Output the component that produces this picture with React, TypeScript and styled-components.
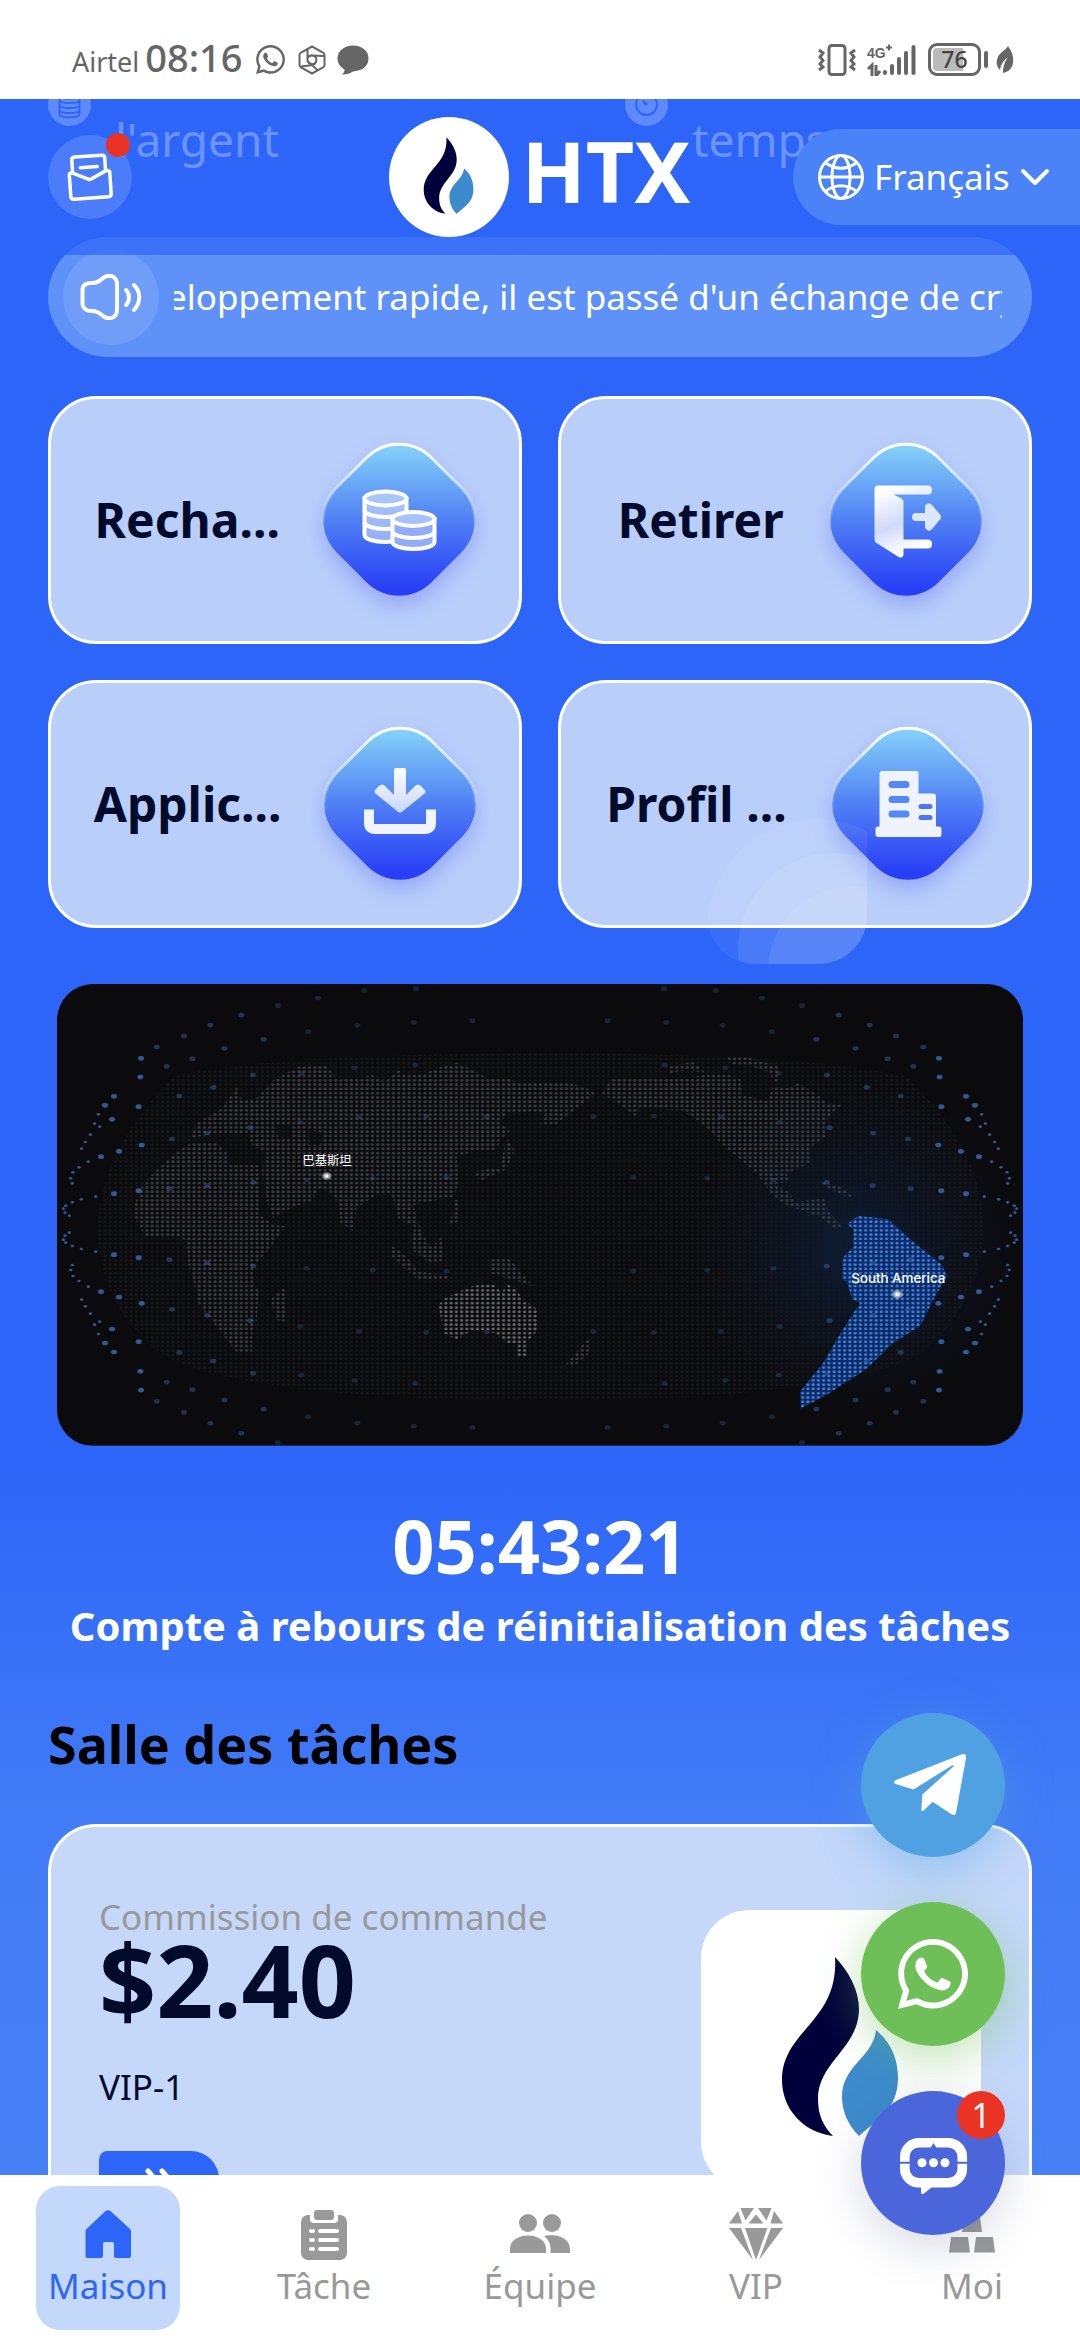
import { useId } from 'react'
import type { ReactNode } from 'react'
import styled, { createGlobalStyle } from 'styled-components'
import { FaWhatsapp } from 'react-icons/fa'

type tileType = { label: string; icon: ReactNode }
type tabType = { label: string; icon: ReactNode; active?: boolean }

/* ---------- logo ---------- */

const Flame = () => (
  <svg viewBox="0 0 280 280" width="100%" height="100%" aria-hidden="true">
    <rect width="280" height="280" fill="#fff" />
    <path
      d="M134 47C148 62 158 80 158 99C158 138 117 152 117 189C117 205 122 216 132 226C101 222 81 198 81 170C81 120 138 112 134 47Z"
      fill="#02003a"
    />
    <path
      d="M175 120C192 134 197 152 197 168C197 200 175 210 158 226C147 215 141 201 141 187C141 155 172 148 175 120Z"
      fill="#3d8bcd"
    />
  </svg>
)

/* ---------- status bar icons ---------- */

const HexIcon = () => (
  <svg width="28" height="30" viewBox="0 0 28 30" fill="none" stroke="#666" strokeWidth="2" aria-hidden="true">
    <path d="M14 1.500L25 7.500Q26.500 8.500 26.500 10V20Q26.500 21.500 25 22.500L14 28.500L3 22.500Q1.500 21.500 1.500 20V10Q1.500 8.500 3 7.500Z" />
    <path d="M9.500 4V16L20 25.500M9.500 14Q10 10.500 14 10.500T18.500 15Q18 19 14 19T9.500 15M12 10.500L26 11M18.500 15Q18 19 15 20L3 21.500" />
  </svg>
)

const BubbleIcon = () => (
  <svg width="32" height="30" viewBox="0 0 32 30" fill="#666" aria-hidden="true">
    <path d="M16 0.500C25 0.500 31.500 6 31.500 13.500S25 26 16 26.500C13 28.500 9 29.800 5 29.500C7 28 7.500 26.500 7.500 24.500C3 22 0.500 18 0.500 13.500C0.500 6 7 0.500 16 0.500Z" />
  </svg>
)

const VibrateIcon = () => (
  <svg width="38" height="32" viewBox="0 0 38 32" fill="none" stroke="#666" strokeWidth="3" aria-hidden="true">
    <rect x="11" y="1.500" width="16" height="29" rx="3" />
    <path d="M1 6L5 9L2 13L5 16.500L2 20L5 23L1 26M37 6L33 9L36 13L33 16.500L36 20L33 23L37 26" />
  </svg>
)

const SignalIcon = () => (
  <svg width="50" height="32" viewBox="0 0 50 32" aria-hidden="true">
    <text x="0" y="14" fontSize="14" fontWeight="700" fill="#666" fontFamily="'Liberation Sans', sans-serif">
      4G
    </text>
    <path d="M19 3.500h6M22 0.500v6" stroke="#666" strokeWidth="2" />
    <path d="M1 25L5 21V32M9 21V32L13 27" stroke="#666" strokeWidth="3" fill="none" />
    <path d="M18 28v1M25 22v7M32 15v14M39 9v20M46.500 3v26" stroke="#666" strokeWidth="4" strokeLinecap="round" />
  </svg>
)

const LeafIcon = () => (
  <svg width="18" height="28" viewBox="0 0 18 28" fill="#666" aria-hidden="true">
    <path d="M12 0C16 6 18 11 17 17C16 23 12 26 7 27C7 20 9 15 12 11C8 14 5 18 4 24C0 20 0 15 2 11C4 6 9 5 12 0Z" />
  </svg>
)

/* ---------- header icons ---------- */

const MailIcon = () => (
  <svg width="46" height="48" viewBox="0 0 46 48" fill="none" stroke="#fff" strokeWidth="3.500" strokeLinejoin="round" aria-hidden="true">
    <g transform="rotate(-4 23 24)">
      <path d="M6 19V6Q6 3 9 3H36Q39 3 39 6V19" />
      <path d="M2.500 20Q3 18 6 19L21 26Q22.500 27 24 26L39 19Q42 18 43 20V42Q43 45 40 45H5.500Q2.500 45 2.500 42Z" />
      <path d="M14 14H31" strokeLinecap="round" />
    </g>
  </svg>
)

const GlobeIcon = () => (
  <svg width="46" height="46" viewBox="0 0 46 46" fill="none" stroke="#fff" strokeWidth="3" aria-hidden="true">
    <circle cx="23" cy="23" r="21.500" />
    <ellipse cx="23" cy="23" rx="9" ry="21.500" />
    <path d="M1.500 23H44.500M7 8.500Q23 20 39 8.500M7 37.500Q23 26 39 37.500" />
  </svg>
)

const ChevronIcon = () => (
  <svg width="30" height="18" viewBox="0 0 30 18" fill="none" stroke="#fff" strokeWidth="4" strokeLinecap="round" strokeLinejoin="round" aria-hidden="true">
    <path d="M3 3L15 15L27 3" />
  </svg>
)

const SpeakerIcon = () => (
  <svg width="62" height="46" viewBox="0 0 62 46" fill="none" stroke="#fff" strokeWidth="4" strokeLinecap="round" aria-hidden="true">
    <path d="M12 9C17 9 20 7 23 4C30-1 37 3 37 10V36C37 43 30 47 23 42C20 39 17 37 12 37C5 37 2.500 33 2.500 30V16C2.500 12 5 9 12 9Z" />
    <path d="M46 16C50 20 50 27 46 31M54 11C61 18 61 28 54 36" />
  </svg>
)

const CoinsBadge = () => (
  <svg width="43" height="43" viewBox="0 0 43 43" fill="none" aria-hidden="true">
    <circle cx="21.500" cy="21.500" r="21.500" fill="#fff" opacity="0.8" />
    <g stroke="#2c65f8" strokeWidth="2">
      <ellipse cx="21.500" cy="12" rx="10" ry="3.500" />
      <path d="M11.500 12V31C11.500 35.500 31.500 35.500 31.500 31V12M11.500 17C11.500 21 31.500 21 31.500 17M11.500 22C11.500 26 31.500 26 31.500 22M11.500 27C11.500 31 31.500 31 31.500 27" />
    </g>
  </svg>
)

const ClockBadge = () => (
  <svg width="43" height="43" viewBox="0 0 43 43" fill="none" aria-hidden="true">
    <circle cx="21.500" cy="21.500" r="21.500" fill="#fff" opacity="0.8" />
    <circle cx="21.500" cy="21.500" r="10.500" stroke="#2c65f8" strokeWidth="2" />
    <path d="M22 22L18 18" stroke="#2c65f8" strokeWidth="3" />
  </svg>
)

/* ---------- tile icons ---------- */

const Diamond = ({ children }: { children: ReactNode }) => {
  const id = useId()
  return (
    <DiamondSvg viewBox="0 0 152 152" aria-hidden="true">
      <defs>
        <linearGradient id={`${id}fill`} x1="0" y1="0" x2="1" y2="1">
          <stop offset="0.120" stopColor="#83cff9" />
          <stop offset="0.480" stopColor="#5284f4" />
          <stop offset="0.860" stopColor="#283ff6" />
        </linearGradient>
        <linearGradient id={`${id}edge`} x1="0" y1="0" x2="1" y2="1">
          <stop offset="0.100" stopColor="#fff" />
          <stop offset="0.450" stopColor="#fff" stopOpacity="0.2" />
          <stop offset="0.550" stopColor="#fff" stopOpacity="0" />
        </linearGradient>
      </defs>
      <rect
        x="9"
        y="9"
        width="134"
        height="134"
        rx="46"
        transform="rotate(45 76 76)"
        fill={`url(#${id}fill)`}
        stroke={`url(#${id}edge)`}
        strokeWidth="3"
      />
      {children}
    </DiamondSvg>
  )
}

const CoinsIcon = () => (
  <Diamond>
    <g stroke="#fff" strokeWidth="4">
      <path d="M41.500 54.500V91C41.500 95 51 98 62.500 98S83.500 95 83.500 91V54.500Z" fill="#fff" fillOpacity="0.45" />
      <ellipse cx="62.500" cy="54.500" rx="21" ry="7" fill="#a9c6f8" />
      <path d="M41.500 66C41.500 70 51 73 62.500 73S83.500 70 83.500 66M41.500 78C41.500 82 51 85 62.500 85S83.500 82 83.500 78" fill="none" />
      <path d="M69.500 75V98C69.500 102 79 105 90.500 105S111.500 102 111.500 98V75Z" fill="#93acf7" />
      <ellipse cx="90.500" cy="75" rx="21" ry="7" fill="#a9c1f8" />
      <path d="M69.500 87C69.500 91 79 94 90.500 94S111.500 91 111.500 87" fill="none" />
    </g>
  </Diamond>
)

const ExitIcon = () => (
  <Diamond>
    <defs>
      <linearGradient id="door" x1="0" y1="0" x2="0.300" y2="1">
        <stop offset="0.100" stopColor="#fff" />
        <stop offset="0.600" stopColor="#cfdafa" />
        <stop offset="1" stopColor="#fff" />
      </linearGradient>
    </defs>
    <path
      d="M48 41.500H98Q102 41.500 102 46T98 50.500H63.500L71.500 54.500Q73.500 55.500 73.500 58V95.500H98Q102 95.500 102 100T98 104.500H73.500V110Q73.500 114 69.500 113.500L46.500 99Q44.500 98 44.500 95V45Q44.500 41.500 48 41.500Z"
      fill="url(#door)"
    />
    <path d="M86 73H102M99 63.500L107 73L99 82.500Z" fill="#dce7fd" stroke="#dce7fd" strokeWidth="8" strokeLinecap="round" strokeLinejoin="round" />
  </Diamond>
)

const DownloadIcon = () => (
  <Diamond>
    <defs>
      <linearGradient id="arrow" x1="0" y1="0" x2="0" y2="1">
        <stop offset="0" stopColor="#fff" />
        <stop offset="1" stopColor="#c6d6fa" />
      </linearGradient>
    </defs>
    <path
      d="M72 40H80Q82 40 82 42V67L91 58Q94 55 97 58L100 61Q103 64 100 66L79 83Q76 86 73 83L52 66Q49 64 52 61L55 58Q58 55 61 58L70 67V42Q70 40 72 40Z"
      fill="url(#arrow)"
    />
    <path d="M45 81.500V95Q45 101 51 101H101Q107 101 107 95V81.500" fill="none" stroke="#f1f3fe" strokeWidth="10" />
  </Diamond>
)

const BuildingIcon = () => (
  <Diamond>
    <path
      d="M50 43H84Q86.500 43 86.500 45.500V65.500H101Q104 65.500 104 68.500V98.500H107Q109.500 98.500 109.500 101V106.500Q109.500 109 107 109H46Q43.500 109 43.500 106.500V101Q43.500 98.500 46 98.500H47.500V45.500Q47.500 43 50 43Z"
      fill="#eff3fe"
    />
    <path d="M60 56.500H74M60 71.500H74M60 86H74" stroke="#5388f5" strokeWidth="7" strokeLinecap="round" />
    <path d="M89 78.500H98M89 89.500H98" stroke="#4c76f5" strokeWidth="5" strokeLinecap="round" />
  </Diamond>
)

const Petals = () => (
  <PetalsSvg viewBox="0 0 160 145" aria-hidden="true">
    <defs>
      <clipPath id="petal-clip">
        <path d="M0 0H160V97A48 48 0 0 1 112 145H48A48 48 0 0 1 0 97Z" />
      </clipPath>
    </defs>
    <g clipPath="url(#petal-clip)" fill="#fff">
      <circle cx="110" cy="110" r="110" fillOpacity="0.06" />
      <circle cx="127" cy="130" r="96" fillOpacity="0.09" />
      <circle cx="146" cy="152" r="85" fillOpacity="0.08" />
    </g>
  </PetalsSvg>
)

/* ---------- dotted world map ---------- */

const land = [
  // europe and asia
  'M445 510L475 455L540 420L570 380L590 350L605 390L650 385L700 330L775 290L860 288L895 330L1000 316L1035 335L1075 300L1100 318L1150 312L1200 292L1250 278L1300 300L1340 325L1410 326L1430 340L1590 340L1640 355L1668 370L1640 392L1600 424L1550 462L1500 464L1515 430L1400 430L1380 460L1410 480L1390 502L1365 540L1300 545L1250 560L1258 640L1240 680L1190 690L1120 705L1145 790L1175 830L1205 800L1212 872L1165 876L1110 835L1125 770L1075 745L1060 690L1040 665L1000 680L950 715L940 785L900 755L895 700L870 665L840 655L810 695L760 710L700 745L680 690L665 600L680 545L640 530L620 490L540 490L470 500Z',
  // africa
  'M450 520L530 520L560 545L570 585L655 585L660 735L700 765L735 768L690 835L640 890L640 940L655 960L650 1055L638 1080L635 1147L590 1147L525 1065L475 1000L460 930L445 885L440 812L410 797L315 797L285 745L285 700L310 640L350 600L410 545Z',
  'M725 957L738 957L736 1055L710 1050L695 1000L695 985Z',
  // islands
  'M1055 828L1085 845L1140 905L1222 915L1222 930L1130 926L1055 862Z',
  'M1345 868L1410 866L1480 950L1440 935L1355 912Z',
  'M1400 505L1425 540L1400 598L1320 632L1300 605L1380 590Z',
  'M1245 690L1257 690L1257 755L1230 760Z',
  'M1575 1186L1640 1110L1652 1110L1652 1146L1600 1190Z',
  // north america
  'M1685 370L1715 326L1920 326L2000 314L2070 316L2100 325L2110 375L2180 392L2200 345L2240 355L2275 340L2340 378L2360 402L2405 405L2365 440L2355 505L2310 530L2310 580L2240 610L2248 635L2205 642L2250 668L2262 695L2320 690L2350 682L2372 735L2408 768L2382 775L2340 740L2280 720L2220 697L2190 665L2145 605L2090 560L2035 512L2000 472L1925 420L1800 414L1785 438L1735 400Z',
  'M2060 262L2125 262L2215 290L2212 342L2185 305L2120 285L2080 285Z',
  'M1888 288L1960 276L1996 308L1940 300L1890 310Z',
  'M2330 632L2405 650L2440 682L2400 675Z',
].join('')

const australia =
  'M1195 1005L1215 985L1280 955L1330 940L1365 945L1385 970L1400 942L1428 955L1445 985L1494 1020L1494 1080L1455 1122L1400 1118L1365 1090L1300 1080L1250 1108L1212 1090ZM1430 1122L1462 1122L1462 1160L1430 1160Z'

const southAmerica =
  'M2422 762L2455 737L2545 748L2625 820L2702 880L2722 918L2685 980L2640 1068L2555 1122L2480 1196L2360 1274L2282 1316L2280 1265L2350 1178L2395 1100L2430 1045L2460 1000L2438 990L2420 935L2405 925L2408 865L2440 830L2440 780Z'

const sea =
  'M400 320Q700 250 1500 250T2600 320Q2830 540 2830 770T2640 1150Q2400 1290 1500 1290T360 1150Q170 1000 175 770T400 320Z'

// one quarter of the orbit, the other three are its mirror images
const orbit = [
  [303, 265], [350, 231], [432, 198], [511, 165], [604, 135], [714, 107], [834, 84], [973, 62], [1128, 56],
  [301, 321], [380, 289], [457, 266], [553, 235], [671, 208], [805, 185], [952, 166], [1121, 157], [1297, 152],
  [222, 379], [195, 406], [175, 433], [296, 410], [216, 448], [179, 470], [164, 461], [151, 494], [136, 516],
  [125, 536], [418, 378], [520, 352], [639, 315], [784, 310], [944, 294], [1126, 285], [183, 560], [237, 544],
  [305, 525], [396, 507], [501, 489], [631, 473], [781, 456], [957, 441], [1159, 438], [1340, 440], [145, 575],
  [117, 592], [99, 607], [92, 625], [97, 640], [222, 671], [296, 662], [388, 656], [502, 647], [640, 637],
  [800, 630], [998, 625], [1220, 622], [167, 680], [124, 688], [97, 697], [77, 707], [70, 716], [75, 728], [88, 737],
]

const DotPattern = ({ id, color }: { id: string; color: string }) => (
  <pattern id={id} x="281" y="285.570" width="15.740" height="12.860" patternUnits="userSpaceOnUse">
    <rect x="3.500" y="3.500" width="9" height="6.500" rx="3" fill={color} />
  </pattern>
)

const WorldMap = () => (
  <svg viewBox="51 42 2898 1385" width="100%" role="img" aria-label="Carte du monde">
    <defs>
      <DotPattern id="dots-sea" color="#16181b" />
      <DotPattern id="dots-land" color="#3b4046" />
      <DotPattern id="dots-bright" color="#6a6c70" />
      <DotPattern id="dots-blue" color="#4a86dd" />
      <radialGradient id="glow">
        <stop offset="0" stopColor="#0c2a5c" stopOpacity="0.6" />
        <stop offset="0.500" stopColor="#0b1f42" stopOpacity="0.35" />
        <stop offset="1" stopColor="#0b1a33" stopOpacity="0" />
      </radialGradient>
      <radialGradient id="spot">
        <stop offset="0.200" stopColor="#fff" />
        <stop offset="0.500" stopColor="#fff" stopOpacity="0.6" />
        <stop offset="1" stopColor="#fff" stopOpacity="0.1" />
      </radialGradient>
    </defs>
    <rect x="51" y="42" width="2898" height="1385" fill="#0b0b0d" />
    <ellipse cx="2450" cy="840" rx="500" ry="500" fill="url(#glow)" />
    <path d={sea} fill="url(#dots-sea)" />
    <path d={land} fill="url(#dots-land)" />
    <path d="M705 466H755V504H715ZM805 480L850 488L840 525H808Z" fill="#0b0b0d" opacity="0.7" />
    <path d={australia} fill="url(#dots-bright)" />
    <path d={southAmerica} fill="#0b2a66" />
    <path d={southAmerica} fill="url(#dots-blue)" />
    {orbit.map(([x, y]) => {
      const edge = x < 180
      const dot = { rx: edge ? 5 : 9, ry: edge ? 4 : 7, fill: '#3d74c4', opacity: x < 310 ? 0.75 : x < 700 ? 0.4 : 0.25 }
      return (
        <g key={`${x}-${y}`}>
          <ellipse cx={x} cy={y} {...dot} />
          <ellipse cx={3000 - x} cy={y} {...dot} />
          <ellipse cx={x} cy={1525 - y} {...dot} />
          <ellipse cx={3000 - x} cy={1525 - y} {...dot} />
        </g>
      )
    })}
    <g fill="#fff" textAnchor="middle">
      <text x="861" y="584" fontSize="37" fontFamily="'Noto Sans CJK SC', sans-serif">
        巴基斯坦
      </text>
      <text x="2575" y="939" fontSize="40" fontWeight="500" fontFamily="Inter, sans-serif">
        South America
      </text>
    </g>
    <ellipse cx="860" cy="618" rx="16" ry="13" fill="url(#spot)" />
    <ellipse cx="2572" cy="973" rx="18" ry="15" fill="url(#spot)" />
  </svg>
)

/* ---------- floating button icons ---------- */

const PlaneIcon = () => (
  <svg width="144" height="144" viewBox="0 0 144 144" fill="#fff" aria-hidden="true">
    <path d="M101 41.200C104 40.300 105.600 42 105 45L95 100C94.500 102.500 92.500 102.500 90.500 101.300L71.500 88.800L63 97.300C61.500 98.600 60.400 98 60.400 96.500L61.300 81.500L92.500 53.500C93.500 52 92 51.800 90.500 52.700L52.500 76.500L34.500 71C32.500 70.200 32.700 68.200 34.500 67.300Z" />
  </svg>
)

const ChatIcon = () => (
  <svg width="144" height="144" viewBox="0 0 144 144" aria-hidden="true">
    <rect x="43.800" y="51.700" width="57.500" height="40" rx="14" fill="none" stroke="#fff" strokeWidth="9.600" />
    <path d="M69.500 57L72.500 52L75.500 57Z" fill="#4b66db" />
    <path d="M60 96V101Q60 104 63 102.500L71 96Z" fill="#fff" />
    <path d="M38 71.700H50M95 71.700H108" stroke="#4b66db" strokeWidth="2" />
    <g fill="#fff">
      <circle cx="61" cy="71.700" r="4.500" />
      <circle cx="72.500" cy="71.700" r="4.500" />
      <circle cx="84" cy="71.700" r="4.500" />
    </g>
  </svg>
)

/* ---------- tab bar icons ---------- */

const HomeIcon = () => (
  <svg width="48" height="48" viewBox="0 0 48 48" fill="currentColor" aria-hidden="true">
    <path d="M21 1.500a4.500 4.500 0 0 1 6 0L46 19a3 3 0 0 1 1 2.500V46a2 2 0 0 1-2 2H32a2 2 0 0 1-2-2V34a2 2 0 0 0-2-2h-7a2 2 0 0 0-2 2v12a2 2 0 0 1-2 2H3.500a2 2 0 0 1-2-2V21.500a3 3 0 0 1 1-2.500z" />
  </svg>
)

const TaskIcon = () => (
  <TabSvg width="48" height="48" viewBox="0 0 48 48" fill="currentColor" aria-hidden="true">
    <rect x="1" y="5" width="46" height="45" rx="7" />
    <path d="M10 0V9Q10 13 14 13H34Q38 13 38 9V0Z" fill="#fff" />
    <rect x="14" y="0" width="20" height="10" rx="3" />
    <path d="M11 21h2M20 21h17M11 30h2M20 30h17M11 39h2M20 39h17" stroke="#fff" strokeWidth="4" strokeLinecap="round" />
  </TabSvg>
)

const TeamIcon = () => (
  <TabSvg width="60" height="48" viewBox="0 0 60 48" fill="currentColor" aria-hidden="true">
    <circle cx="18" cy="13" r="9" />
    <circle cx="42" cy="13" r="9" />
    <path d="M0 43V39C0 30 9 25.500 18 25.500S36 30 36 39V43ZM40.500 43V39C40.500 33 38 29 34 26C37 25.300 39 25.300 42 25.300C51 25.300 60 30 60 39V43Z" />
  </TabSvg>
)

const GemIcon = () => (
  <TabSvg width="54" height="48" viewBox="0 2 54 48" fill="currentColor" aria-hidden="true">
    <path d="M9 3L0 15.500H13ZM11.500 0H25L16.500 12.500ZM27 6.500L19.500 15.500H34.500ZM29 0H42.500L37.500 12.500ZM45 3L41.500 15.500H54Z" />
    <path d="M0 20H12L24 52ZM16 20H38.500L27 52ZM42 20H54L30 52Z" />
  </TabSvg>
)

const IngotIcon = () => (
  <TabSvg width="48" height="48" viewBox="0 0 48 48" fill="currentColor" aria-hidden="true">
    <path d="M16 7H32L34 22H14ZM3 27H20L22 42.500H1ZM28 27H45L47 42.500H26Z" />
  </TabSvg>
)

const tiles: tileType[] = [
  { label: 'Recha...', icon: <CoinsIcon /> },
  { label: 'Retirer', icon: <ExitIcon /> },
  { label: 'Applic...', icon: <DownloadIcon /> },
  { label: 'Profil ...', icon: <BuildingIcon /> },
]

const tabs: tabType[] = [
  { label: 'Maison', icon: <HomeIcon />, active: true },
  { label: 'Tâche', icon: <TaskIcon /> },
  { label: 'Équipe', icon: <TeamIcon /> },
  { label: 'VIP', icon: <GemIcon /> },
  { label: 'Moi', icon: <IngotIcon /> },
]

const StatusBar = () => (
  <StatusBarWrap>
    <StatusGroup>
      <Clock>
        <span>Airtel</span>
        <time>08:16</time>
      </Clock>
      <FaWhatsapp size={33} />
      <HexIcon />
      <BubbleIcon />
    </StatusGroup>
    <StatusGroup>
      <VibrateIcon />
      <SignalIcon />
      <Battery>76</Battery>
      <LeafIcon />
    </StatusGroup>
  </StatusBarWrap>
)

const Header = () => (
  <HeaderWrap>
    <MailButton type="button" aria-label="Messages">
      <MailIcon />
      <RedDot />
    </MailButton>
    <Brand>
      <BrandLogo>
        <Flame />
      </BrandLogo>
      <BrandName>HTX</BrandName>
    </Brand>
    <Language>
      <GlobeIcon />
      <LanguageSelect aria-label="Langue" defaultValue="fr">
        <option value="fr">Français</option>
      </LanguageSelect>
      <ChevronIcon />
    </Language>
  </HeaderWrap>
)

const Task = () => (
  <TaskCard>
    <TaskInfo>
      <TaskCaption>Commission de commande</TaskCaption>
      <TaskAmount>$2.40</TaskAmount>
      <TaskLevel>VIP-1</TaskLevel>
      <TaskButton type="button" aria-label="Ouvrir">
        <svg width="30" height="24" viewBox="0 0 30 24" fill="none" stroke="#fff" strokeWidth="5" strokeLinecap="round" strokeLinejoin="round" aria-hidden="true">
          <path d="M4 4L11 12L4 20M18 4L25 12L18 20" />
        </svg>
      </TaskButton>
    </TaskInfo>
    <TaskImage>
      <Flame />
    </TaskImage>
  </TaskCard>
)

export default function App() {
  return (
    <Screen>
      <GlobalStyle />
      <StatusBar />
      <Main>
        <Header />
        <Content>
          <Perks>
            <Perk>
              <CoinsBadge />
              <PerkText>l'argent</PerkText>
            </Perk>
            <Perk>
              <ClockBadge />
              <PerkText>temps</PerkText>
            </Perk>
          </Perks>
          <Notice>
            <NoticeIcon>
              <SpeakerIcon />
            </NoticeIcon>
            <NoticeText>eloppement rapide, il est passé d'un échange de cry</NoticeText>
          </Notice>
          <Tiles>
            {tiles.map(({ label, icon }) => (
              <Tile key={label} type="button">
                <TileLabel>{label}</TileLabel>
                {icon}
              </Tile>
            ))}
            <Petals />
          </Tiles>
          <MapWrap>
            <WorldMap />
          </MapWrap>
          <Countdown>05:43:21</Countdown>
          <CountdownLabel>Compte à rebours de réinitialisation des tâches</CountdownLabel>
          <SectionTitle>Salle des tâches</SectionTitle>
          <Task />
        </Content>
      </Main>
      <TabBar>
        {tabs.map(({ label, icon, active }) => (
          <Tab key={label} href="#" $active={active}>
            {icon}
            <span>{label}</span>
          </Tab>
        ))}
      </TabBar>
      <Floats>
        <FloatButton type="button" aria-label="Telegram" $color="#50a1e1" $glow="rgba(80, 161, 225, 0.45)">
          <PlaneIcon />
        </FloatButton>
        <FloatButton type="button" aria-label="WhatsApp" $color="#6fbf59" $glow="rgba(111, 191, 89, 0.45)">
          <FaWhatsapp size={80} />
        </FloatButton>
        <FloatButton type="button" aria-label="Chat" $color="#4b66db" $glow="rgba(60, 70, 120, 0.2)">
          <ChatIcon />
          <Badge>1</Badge>
        </FloatButton>
      </Floats>
    </Screen>
  )
}

const GlobalStyle = createGlobalStyle`
  * {
    box-sizing: border-box;
  }

  body {
    margin: 0;
    font-family: 'Noto Sans', 'Noto Sans CJK SC', sans-serif;
    font-size: 35px;
    line-height: 48px;
  }

  h1, h2, p {
    margin: 0;
  }

  button, select {
    padding: 0;
    border: 0;
    font: inherit;
    color: inherit;
  }

  svg {
    display: block;
    flex-shrink: 0;
  }
`

const Screen = styled.div`
  display: flex;
  flex-direction: column;
  height: 100vh;
`

const StatusBarWrap = styled.div`
  display: flex;
  justify-content: space-between;
  align-items: center;
  height: 99px;
  padding: 20px 66px 0 72px;
  background: #fff;
  color: #666;
`

const StatusGroup = styled.div`
  display: flex;
  align-items: center;
  gap: 11px;
`

const Clock = styled.div`
  display: flex;
  align-items: baseline;
  gap: 6px;
  font-size: 27px;

  time {
    font-size: 38px;
    font-weight: 500;
  }
`

const Battery = styled.div`
  position: relative;
  width: 53px;
  height: 33px;
  margin-right: 4px;
  border: 3px solid #666;
  border-radius: 9px;
  background: linear-gradient(90deg, #bbb 70%, #fff 70%) content-box;
  padding: 2px;
  color: #444;
  font-size: 23px;
  font-weight: 500;
  line-height: 23px;
  text-align: center;

  &::after {
    content: '';
    position: absolute;
    top: 5px;
    right: -10px;
    width: 4px;
    height: 17px;
    border-radius: 2px;
    background: #666;
  }
`

const Main = styled.main`
  position: relative;
  flex: 1;
  min-height: 0;
  overflow: hidden;
  background: linear-gradient(#2c65f8 65%, #427cf6 83%, #4880f6);
`

const HeaderWrap = styled.header`
  position: absolute;
  inset: 0 0 auto;
  z-index: 1;
  display: grid;
  grid-template-columns: 1fr auto 1fr;
  align-items: center;
  height: 156px;
  background: rgba(44, 101, 248, 0.7);
  color: #fff;
`

const MailButton = styled.button`
  position: relative;
  display: grid;
  place-items: center;
  width: 84px;
  height: 84px;
  margin-left: 48px;
  border-radius: 50%;
  background: rgba(255, 255, 255, 0.15);
`

const RedDot = styled.span`
  position: absolute;
  top: -2px;
  right: 2px;
  width: 24px;
  height: 24px;
  border-radius: 50%;
  background: #eb3323;
`

const Brand = styled.div`
  display: flex;
  align-items: center;
  gap: 12px;
`

const BrandLogo = styled.div`
  width: 120px;
  height: 120px;
  border-radius: 50%;
  overflow: hidden;
`

const BrandName = styled.h1`
  padding-bottom: 12px;
  font-size: 84px;
  font-weight: 700;
  line-height: 96px;
`

const Language = styled.label`
  display: flex;
  justify-self: end;
  align-items: center;
  gap: 10px;
  height: 96px;
  padding: 0 30px 0 25px;
  border-radius: 48px 0 0 48px;
  background: #4a82f7;
`

const LanguageSelect = styled.select`
  appearance: none;
  background: transparent;
`

const Content = styled.div`
  margin-top: -16px;
  padding: 0 48px;
`

const Perks = styled.div`
  display: grid;
  grid-template-columns: 577px 1fr;
  margin-bottom: 63px;
`

const Perk = styled.div`
  display: flex;
  align-items: flex-start;
  gap: 24px;
`

const PerkText = styled.span`
  padding-top: 21px;
  color: #fff;
  font-size: 46px;
  line-height: 70px;
`

const Notice = styled.div`
  display: flex;
  align-items: center;
  gap: 15px;
  height: 120px;
  margin-bottom: 39px;
  padding: 0 30px 0 15px;
  border-radius: 60px;
  background: #5f92f8;
  color: #fff;
`

const NoticeIcon = styled.div`
  display: grid;
  flex-shrink: 0;
  place-items: center;
  width: 96px;
  height: 96px;
  border-radius: 50%;
  background: rgba(255, 255, 255, 0.1);
`

const NoticeText = styled.p`
  overflow: hidden;
  text-indent: -7px;
  white-space: nowrap;
`

const Tiles = styled.div`
  position: relative;
  display: grid;
  grid-template-columns: 1fr 1fr;
  grid-auto-rows: 248px;
  gap: 36px;
  margin-bottom: 56px;
`

const Tile = styled.button`
  display: flex;
  justify-content: space-evenly;
  align-items: center;
  border: 3px solid #fff;
  border-radius: 48px;
  background: #b9cffa;
  color: #020a2c;
`

const TileLabel = styled.span`
  min-width: 176px;
  font-size: 48px;
  font-weight: 700;
  line-height: 64px;
  text-align: right;
`

const DiamondSvg = styled.svg`
  width: 152px;
  height: 152px;
  overflow: visible;
  filter: drop-shadow(0 10px 10px rgba(60, 70, 245, 0.28));
`

const PetalsSvg = styled.svg`
  position: absolute;
  right: 165px;
  bottom: -36px;
  width: 160px;
  height: 145px;
`

const MapWrap = styled.div`
  margin: 0 9px 52px;
  border-radius: 36px;
  overflow: hidden;
`

const Countdown = styled.p`
  color: #fff;
  font-size: 74px;
  font-weight: 700;
  line-height: 96px;
  text-align: center;
`

const CountdownLabel = styled.p`
  margin-bottom: 46px;
  color: #fff;
  font-size: 40px;
  font-weight: 700;
  line-height: 64px;
  text-align: center;
`

const SectionTitle = styled.h2`
  margin-bottom: 40px;
  color: #000;
  font-size: 52px;
  font-weight: 700;
  line-height: 80px;
`

const TaskCard = styled.section`
  display: flex;
  justify-content: space-between;
  align-items: center;
  padding: 66px 48px;
  border: 3px solid #fff;
  border-radius: 48px;
  background: #c5d8fa;
  color: #020a2c;
`

const TaskInfo = styled.div`
  display: flex;
  flex-direction: column;
  align-items: flex-start;
`

const TaskCaption = styled.p`
  color: #999;
`

const TaskAmount = styled.p`
  font-size: 100px;
  font-weight: 700;
  line-height: 76px;
`

const TaskLevel = styled.p`
  margin: 46px 0 40px;
`

const TaskButton = styled.button`
  display: grid;
  place-items: center;
  width: 120px;
  height: 56px;
  border-radius: 12px 40px 40px 12px;
  background: #2c65f8;
`

const TaskImage = styled.div`
  width: 280px;
  height: 280px;
  border-radius: 48px;
  overflow: hidden;
`

const TabBar = styled.nav`
  display: grid;
  grid-template-columns: repeat(5, 1fr);
  justify-items: center;
  height: 165px;
  padding-top: 11px;
  background: #fff;
`

const Tab = styled.a<{ $active?: boolean }>`
  display: flex;
  flex-direction: column;
  align-items: center;
  gap: 4px;
  width: 144px;
  height: 144px;
  padding-top: 24px;
  border-radius: 24px;
  background: ${({ $active }) => ($active ? '#c4d8fb' : 'transparent')};
  color: ${({ $active }) => ($active ? '#2c65f8' : '#999')};
  text-decoration: none;
`

const TabSvg = styled.svg`
  overflow: visible;
`

const Floats = styled.div`
  position: fixed;
  right: 75px;
  bottom: 105px;
  z-index: 2;
  display: flex;
  flex-direction: column;
  gap: 45px;
`

const FloatButton = styled.button<{ $color: string; $glow: string }>`
  position: relative;
  display: grid;
  place-items: center;
  width: 144px;
  height: 144px;
  border-radius: 50%;
  background: ${({ $color }) => $color};
  box-shadow: 0 12px 48px ${({ $glow }) => $glow};
  color: #fff;
`

const Badge = styled.span`
  position: absolute;
  top: 0;
  right: 0;
  width: 48px;
  height: 48px;
  border-radius: 50%;
  background: #eb3323;
`
